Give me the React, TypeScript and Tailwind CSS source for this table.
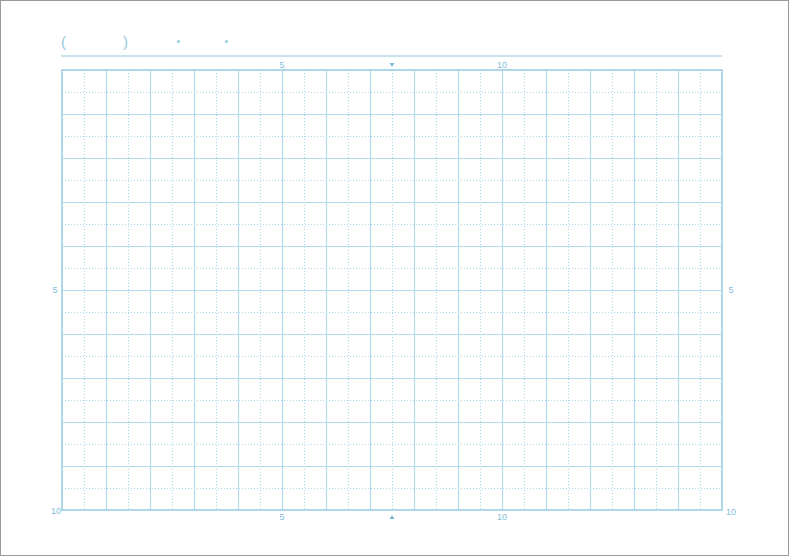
import React from 'react';

const X0 = 62;
const Y0 = 70;
const CELL = 44;
const COLS = 15;
const ROWS = 10;
const W = CELL * COLS;
const H = CELL * ROWS;

const solid = '#b2dcee';
const dotted = '#a9d8ec';
const label = '#80bed9';

export default function App() {
  const cols = Array.from({ length: COLS }, (_, i) => i);
  const rows = Array.from({ length: ROWS }, (_, i) => i);

  return (
    <div className="w-[789px] h-[556px] bg-white shadow-[inset_0_0_0_1px_#9a9a9a] flex flex-col overflow-hidden" style={{ fontFamily: '"Liberation Sans", Arial, sans-serif' }}>
      {/* Header: name / date fields */}
      <div className="h-[60px] pl-[61px] pr-[66px] pt-[31px] flex flex-col">
        <div className="flex items-center h-[20px] text-[15px] text-[#93c9e1] leading-none">
          <span className="w-[62px]">(</span>
          <span className="w-[54px]">)</span>
          <span className="w-[3px] h-[3px] rounded-full bg-[#93c9e1]"></span>
          <span className="w-[45px]"></span>
          <span className="w-[3px] h-[3px] rounded-full bg-[#93c9e1]"></span>
        </div>
        <div className="mt-[4px] h-[2px] w-[661px] bg-[#c6e3f0]"></div>
      </div>

      {/* Grid paper */}
      <svg width={789} height={496} viewBox="0 60 789 496" className="block">
        {/* dotted half lines */}
        {cols.map(i => (
          <line key={'dv' + i} x1={X0 + CELL * i + 22.5} y1={Y0} x2={X0 + CELL * i + 22.5} y2={Y0 + H} stroke={dotted} strokeWidth={1} strokeDasharray="1 2" />
        ))}
        {rows.map(j => (
          <line key={'dh' + j} x1={X0} y1={Y0 + CELL * j + 22.5} x2={X0 + W} y2={Y0 + CELL * j + 22.5} stroke={dotted} strokeWidth={1} strokeDasharray="1 2" />
        ))}
        {/* solid lines */}
        {cols.slice(1).map(i => (
          <line key={'sv' + i} x1={X0 + CELL * i + 0.5} y1={Y0} x2={X0 + CELL * i + 0.5} y2={Y0 + H} stroke={solid} strokeWidth={1.2} />
        ))}
        {rows.slice(1).map(j => (
          <line key={'sh' + j} x1={X0} y1={Y0 + CELL * j + 0.5} x2={X0 + W} y2={Y0 + CELL * j + 0.5} stroke={solid} strokeWidth={1.2} />
        ))}
        <rect x={X0} y={Y0} width={W} height={H} fill="none" stroke="#9ccde4" strokeWidth={1.6} />

        {/* labels */}
        <g fill={label} fontSize={9} fontFamily='"Liberation Sans", Arial, sans-serif' textAnchor="middle">
          <text x={282} y={68}>5</text>
          <text x={502} y={68}>10</text>
          <text x={282} y={520}>5</text>
          <text x={502} y={520}>10</text>
          <text x={55} y={293}>5</text>
          <text x={731} y={293}>5</text>
          <text x={56} y={514}>10</text>
          <text x={731} y={515}>10</text>
        </g>
        <polygon points="389.5,63 394.5,63 392,67" fill={label} />
        <polygon points="389.5,519 394.5,519 392,515" fill={label} />
      </svg>
    </div>
  );
}
